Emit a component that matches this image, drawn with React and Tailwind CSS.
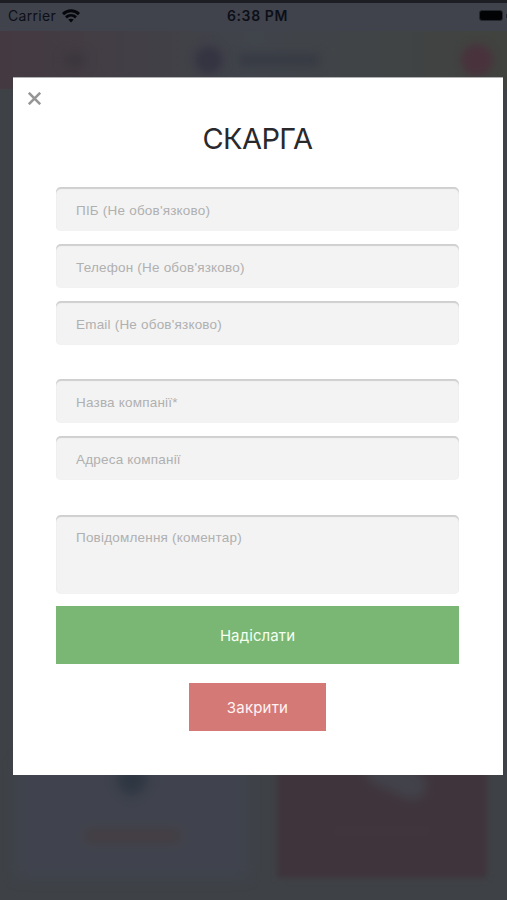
import { useState } from 'react';

const groups = [
  [
    { name: 'fullName', label: "ПІБ (Не обов'язково)" },
    { name: 'phone', label: "Телефон (Не обов'язково)" },
    { name: 'email', label: "Email (Не обов'язково)" },
  ],
  [
    { name: 'company', label: 'Назва компанії*' },
    { name: 'address', label: 'Адреса компанії' },
  ],
];

const fieldClass =
  "block w-full rounded-[5px] bg-[#f3f3f3] px-5 font-['Liberation_Sans',sans-serif] text-[13.5px] tracking-[0.2px] text-[#333] shadow-[inset_0_2px_1px_#cfcfcf,inset_0_0_1px_#e6e6e6] outline-none placeholder:text-[#b0b0b0]";

function StatusBar() {
  return (
    <div className="grid h-[31px] grid-cols-3 items-center border-t-[3px] border-[#1c1e24] bg-[#40434b] pb-[3px] pl-2 text-[14px] text-[#0c0f18]">
      <div className="flex items-center gap-1.5">
        <span className="tracking-[0.3px]">Carrier</span>
        <svg width="18" height="14" viewBox="0 0 18 14" fill="none" stroke="#05070c" strokeWidth="2.9">
          <path d="M1 5.1C5.6.7 12.4.7 17 5.1" />
          <path d="M4 8.4c2.9-2.7 7.1-2.7 10 0" />
          <path d="M6.3 10.6c1.6-1.3 3.8-1.3 5.4 0L9 13.4z" fill="#05070c" stroke="none" />
        </svg>
      </div>
      <div className="text-center font-semibold tracking-[0.6px] whitespace-nowrap">6:38 PM</div>
      <div className="flex items-center justify-end gap-[3px]">
        <div className="h-[11px] w-6 rounded-[3px] border border-[#24272d] bg-[#020305]" />
        <div className="h-1 w-px bg-[#24272d]" />
      </div>
    </div>
  );
}

function Page() {
  return (
    <div className="flex h-[900px] flex-col bg-[#3e4247]">
      <StatusBar />
      <div className="flex h-[58px] items-center bg-linear-to-r from-[#443940] via-[#40444b] to-[#41433f]">
        <div className="ml-[65px] h-3 w-5 rounded-full bg-[#38333b] blur-[6px]" />
        <div className="ml-[110px] size-7 rounded-full bg-[#343442] blur-[5px]" />
        <div className="ml-4 h-3 w-20 bg-[#373a43] blur-[5px]" />
        <div className="mr-3.5 ml-auto size-8 rounded-full bg-[#49323c] blur-[4px]" />
      </div>
      <div className="grow" />
      <div className="flex h-[118px] justify-between pr-5 pl-4">
        <div className="flex w-[232px] flex-col items-center bg-[#40434d] blur-[6px]">
          <div className="mt-2 size-6 rotate-45 bg-[#27323e] blur-[6px]" />
          <div className="mt-[38px] h-3 w-[95px] bg-[#443d40]" />
        </div>
        <div className="flex w-[210px] flex-col items-center bg-[#3f343b] blur-[3px]">
          <div className="mt-1 ml-7 h-7 w-16 rotate-[25deg] rounded-full bg-[#42424b] blur-[5px]" />
          <div className="mt-9 h-1.5 w-24 bg-[#42383f] blur-[3px]" />
        </div>
      </div>
      <div className="h-[22px] shrink-0" />
    </div>
  );
}

function ComplaintModal({ onClose }) {
  const [values, setValues] = useState({});

  const handleChange = (e) => {
    setValues({ ...values, [e.target.name]: e.target.value });
  };

  const handleSubmit = (e) => {
    e.preventDefault();
    onClose();
  };

  return (
    <div className="absolute top-[77px] left-[13px] h-[698px] w-[489.5px] border-t border-[#b0b1b3] bg-white pr-[43.5px] pl-[43px]">
      <button type="button" onClick={onClose} aria-label="Закрити" className="mt-[14px] -ml-7 block">
        <svg width="13" height="13" viewBox="0 0 13 13" stroke="#969696" strokeWidth="2.6">
          <path d="M.8.8l11.4 11.4M12.2.8L.8 12.2" />
        </svg>
      </button>
      <h1 className="mt-[14px] text-center text-[29px] leading-10 tracking-[-0.6px] text-[#29292c]">СКАРГА</h1>
      <form onSubmit={handleSubmit} className="mt-[28px]">
        {groups.map((fields) => (
          <div key={fields[0].name} className="mb-[34px] flex flex-col gap-[13px]">
            {fields.map((field) => (
              <input
                key={field.name}
                name={field.name}
                value={values[field.name] || ''}
                onChange={handleChange}
                placeholder={field.label}
                className={`${fieldClass} h-11 pt-0.5`}
              />
            ))}
          </div>
        ))}
        <textarea
          name="message"
          value={values.message || ''}
          onChange={handleChange}
          placeholder="Повідомлення (коментар)"
          className={`${fieldClass} mt-[35px] h-[79px] resize-none pt-[13px]`}
        />
        <button
          type="submit"
          className="mt-3 block h-[58px] w-full bg-[#7ab774] pt-[3px] text-[15px] tracking-[0.1px] text-[#f4fff2]"
        >
          Надіслати
        </button>
        <button
          type="button"
          onClick={onClose}
          className="mx-auto mt-[19px] block h-12 w-[137px] bg-[#d57977] pt-[3px] text-[15px] tracking-[0.2px] text-[#fff3f2]"
        >
          Закрити
        </button>
      </form>
    </div>
  );
}

export default function App() {
  const [open, setOpen] = useState(true);

  return (
    <div className="relative h-[900px] w-full overflow-hidden font-['Inter',sans-serif]">
      <Page />
      {open && <ComplaintModal onClose={() => setOpen(false)} />}
    </div>
  );
}
